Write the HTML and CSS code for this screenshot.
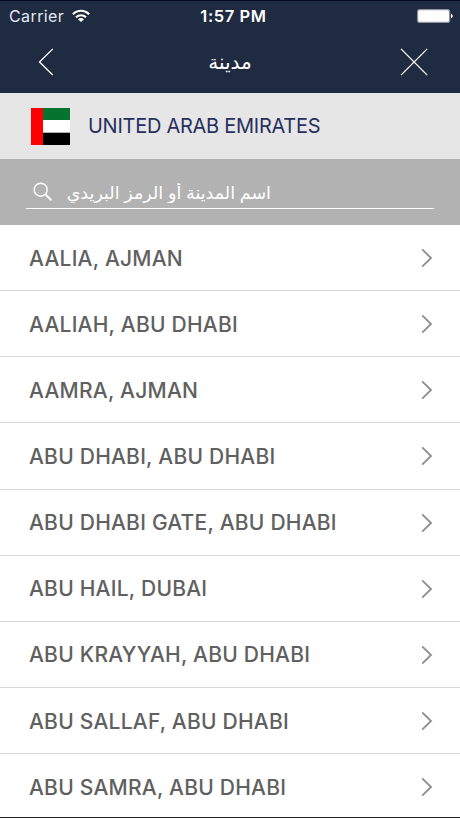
FILE: index.html
```
<!DOCTYPE html>
<html lang="ar">

<head>
    <meta charset="UTF-8">
    <title>مدينة</title>
    <link rel="stylesheet" href="styles.css">
</head>

<body>
    <div class="app">
        <div class="header">
            <div class="status-bar">
                <div class="carrier">
                    <span class="carrier-name">Carrier</span>
                    <svg class="wifi" width="18" height="14" viewBox="0 0 18 14" fill="none" stroke="#fff" stroke-width="2.1">
                        <path d="M.9 5.2C5.4.6 12.6.6 17.1 5.2" />
                        <path d="M4 8.3c2.8-2.8 7.2-2.8 10 0" />
                        <path d="M9 13 6 10.2c1.7-1.6 4.3-1.6 6 0z" fill="#fff" stroke="none" />
                    </svg>
                </div>
                <span class="time">1:57 PM</span>
                <svg class="battery" width="36" height="14" viewBox="0 0 36 14">
                    <rect x=".6" y=".6" width="32" height="12.8" rx="2.2" fill="#fff" stroke="#8f96a3" stroke-width="1.2" />
                    <path d="M34 4.7c2.3.8 2.3 3.8 0 4.6z" fill="#fff" />
                </svg>
            </div>
            <div class="nav-bar">
                <svg class="nav-icon" width="28" height="28" viewBox="0 0 28 28" fill="none" stroke="#fff" stroke-width="1.3">
                    <path d="M20.8.9 7.5 14l13.3 13" />
                </svg>
                <h1 class="title" dir="rtl">مدينة</h1>
                <svg class="nav-icon" width="28" height="28" viewBox="0 0 28 28" fill="none" stroke="#fff" stroke-width="1.3">
                    <path d="M1 .9l26.2 26.2M27.2.9 1 27.1" />
                </svg>
            </div>
        </div>

        <div class="country">
            <svg class="flag" width="39" height="37" viewBox="0 0 39 37">
                <rect width="39" height="37" fill="#fff" />
                <rect width="39" height="12" fill="#04742f" />
                <rect y="24.7" width="39" height="12.3" fill="#000" />
                <rect width="12" height="37" fill="#f00" />
            </svg>
            <span class="country-name">UNITED ARAB EMIRATES</span>
        </div>

        <div class="search">
            <div class="search-field">
                <svg class="search-icon" width="20" height="20" viewBox="0 0 20 20" fill="none" stroke="#fff" stroke-width="1.4">
                    <circle cx="7.7" cy="7.7" r="6.5" />
                    <path d="M12.4 12.4l6 6" stroke-width="2" />
                </svg>
                <input class="search-input" type="text" dir="rtl" placeholder="اسم المدينة أو الرمز البريدي">
            </div>
        </div>

        <ul class="cities">
            <li class="city"><span>AALIA, AJMAN</span><svg class="chevron" viewBox="0 0 12 20"><path d="M1.2 1.4 10 10l-8.8 8.6" /></svg></li>
            <li class="city"><span>AALIAH, ABU DHABI</span><svg class="chevron" viewBox="0 0 12 20"><path d="M1.2 1.4 10 10l-8.8 8.6" /></svg></li>
            <li class="city"><span>AAMRA, AJMAN</span><svg class="chevron" viewBox="0 0 12 20"><path d="M1.2 1.4 10 10l-8.8 8.6" /></svg></li>
            <li class="city"><span>ABU DHABI, ABU DHABI</span><svg class="chevron" viewBox="0 0 12 20"><path d="M1.2 1.4 10 10l-8.8 8.6" /></svg></li>
            <li class="city"><span>ABU DHABI GATE, ABU DHABI</span><svg class="chevron" viewBox="0 0 12 20"><path d="M1.2 1.4 10 10l-8.8 8.6" /></svg></li>
            <li class="city"><span>ABU HAIL, DUBAI</span><svg class="chevron" viewBox="0 0 12 20"><path d="M1.2 1.4 10 10l-8.8 8.6" /></svg></li>
            <li class="city"><span>ABU KRAYYAH, ABU DHABI</span><svg class="chevron" viewBox="0 0 12 20"><path d="M1.2 1.4 10 10l-8.8 8.6" /></svg></li>
            <li class="city"><span>ABU SALLAF, ABU DHABI</span><svg class="chevron" viewBox="0 0 12 20"><path d="M1.2 1.4 10 10l-8.8 8.6" /></svg></li>
            <li class="city"><span>ABU SAMRA, ABU DHABI</span><svg class="chevron" viewBox="0 0 12 20"><path d="M1.2 1.4 10 10l-8.8 8.6" /></svg></li>
        </ul>
    </div>
</body>

</html>
```
FILE: styles.css
```
* {
    box-sizing: border-box;
}

body {
    margin: 0;
    font-family: Inter, "DejaVu Sans", sans-serif;
    background-color: #fff;
}

.app {
    height: 818px;
    overflow: hidden;
    border-bottom: 1px solid #222;
}

.header {
    height: 93px;
    background-color: #1f2b41;
    border-top: 1px solid #050a1e;
    color: #fff;
}

.status-bar {
    display: grid;
    grid-template-columns: 1fr auto 1fr;
    align-items: center;
    height: 30px;
    padding: 0 7px 0 9px;
    font-size: 16px;
}

.carrier {
    display: flex;
    align-items: center;
    gap: 8px;
}

.carrier-name {
    color: #e4e8f0;
    letter-spacing: 0.4px;
}

.time {
    padding-left: 5px;
    font-size: 16.5px;
    font-weight: 600;
    letter-spacing: 0.6px;
}

.battery {
    justify-self: end;
}

.nav-bar {
    display: flex;
    align-items: center;
    justify-content: space-between;
    height: 61px;
    padding: 0 32px;
}

.title {
    margin: 0;
    font-family: "DejaVu Sans", sans-serif;
    font-size: 20px;
    font-weight: normal;
}

.country {
    display: flex;
    align-items: center;
    gap: 18px;
    height: 66px;
    padding-left: 31px;
    background-color: #e6e6e6;
}

.country-name {
    color: #28305f;
    font-size: 20px;
    letter-spacing: -0.27px;
}

.search {
    height: 66px;
    padding: 16px 26px;
    background-color: #b2b2b2;
}

.search-field {
    display: flex;
    align-items: center;
    height: 34px;
    padding-left: 7px;
    border-bottom: 1px solid #fff;
}

.search-input {
    width: 206px;
    height: 30px;
    margin-left: 12px;
    padding: 2px 0 0;
    border: none;
    background: none;
    outline: none;
    font-family: "DejaVu Sans", sans-serif;
    font-size: 17.5px;
    word-spacing: -0.8px;
}

.search-input::placeholder {
    color: #fff;
}

.cities {
    margin: 0;
    padding: 0;
    list-style: none;
}

.city {
    display: flex;
    align-items: center;
    justify-content: space-between;
    height: 66.15px;
    padding: 1px 27px 0 29px;
    border-bottom: 1px solid #d8d8d8;
    color: #606060;
    font-size: 21px;
    font-weight: 500;
    letter-spacing: 0.23px;
}

.chevron {
    width: 12px;
    height: 20px;
    fill: none;
    stroke: #909090;
    stroke-width: 1.9;
}
```
